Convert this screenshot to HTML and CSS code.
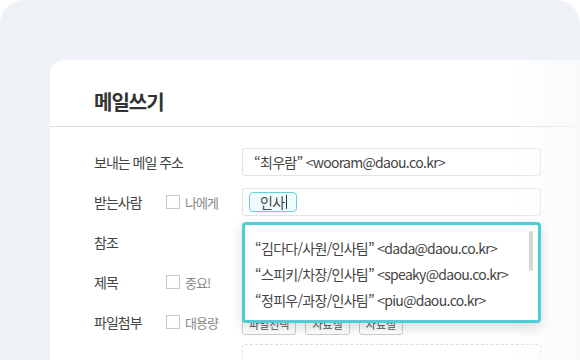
FILE: index.html
```html
<!DOCTYPE html>
<html lang="ko">
<head>
  <meta charset="UTF-8">
  <title>메일쓰기</title>
  <link rel="stylesheet" href="styles.css">
</head>
<body>
  <div class="frame">
    <div class="panel">
      <div class="panelHead">
        <h1>메일쓰기</h1>
      </div>

      <div class="form">
        <div class="row">
          <div class="label">보내는 메일 주소</div>
          <div class="option"></div>
          <div class="field">“최우람” &lt;wooram@daou.co.kr&gt;</div>
        </div>

        <div class="row">
          <div class="label">받는사람</div>
          <div class="option"><span class="check"></span>나에게</div>
          <div class="field">
            <span class="tag">인사<span class="caret"></span></span>
          </div>
          <div class="dropdown">
            <div class="item">“김다다/사원/인사팀” &lt;dada@daou.co.kr&gt;</div>
            <div class="item">“스피키/차장/인사팀” &lt;speaky@daou.co.kr&gt;</div>
            <div class="item">“정피우/과장/인사팀” &lt;piu@daou.co.kr&gt;</div>
            <div class="scroll"></div>
          </div>
        </div>

        <div class="row">
          <div class="label">참조</div>
          <div class="option"></div>
          <div class="field"></div>
        </div>

        <div class="row">
          <div class="label">제목</div>
          <div class="option"><span class="check"></span>중요!</div>
          <div class="field"></div>
        </div>

        <div class="row">
          <div class="label">파일첨부</div>
          <div class="option"><span class="check"></span>대용량</div>
          <div class="buttons">
            <button class="small">파일선택</button>
            <button class="small">자료실</button>
            <button class="small">자료실</button>
          </div>
        </div>

        <div class="dropZone"></div>
      </div>
    </div>
  </div>
</body>
</html>
```

FILE: styles.css
```css
body {
  margin: 0;
  background: #ffffff;
  font-family: "Noto Sans CJK KR", "Liberation Sans", sans-serif;
  color: #444444;
  overflow: hidden;
}
.frame {
  height: 420px;
  padding: 60px 0 0 50px;
  background: #eff3f8;
  border-radius: 24px 24px 0 0;
}
.panel {
  position: relative;
  height: 360px;
  background: #ffffff;
  border-radius: 14px 0 0 0;
}
.panel::after {
  content: "";
  position: absolute;
  top: 0;
  right: 0;
  bottom: 0;
  width: 70px;
  background: linear-gradient(90deg, rgba(247,249,251,0), rgba(247,249,251,0.9));
  pointer-events: none;
}
.panelHead {
  height: 67px;
  padding-left: 44px;
  border-bottom: 1px solid #dcdcdc;
  box-sizing: border-box;
}
h1 {
  margin: 0;
  padding-top: 30px;
  font-size: 20px;
  font-weight: bold;
  letter-spacing: -1px;
  color: #333333;
  line-height: 24px;
}
.form {
  padding: 21px 0 0 44px;
}
.row {
  position: relative;
  display: grid;
  grid-template-columns: 72px 76px 299px;
  align-items: center;
  height: 28px;
  margin-bottom: 12px;
}
.label {
  font-size: 14px;
  letter-spacing: -1px;
  white-space: nowrap;
  color: #444444;
}
.option {
  display: flex;
  align-items: center;
  gap: 5px;
  font-size: 13px;
  letter-spacing: -1px;
  color: #888888;
}
.check {
  width: 12px;
  height: 12px;
  border: 1px solid #c8c8c8;
  background: #ffffff;
}
.field {
  height: 28px;
  box-sizing: border-box;
  border: 1px solid #e3e3e3;
  border-radius: 3px;
  padding: 0 11px;
  font-size: 14px;
  line-height: 26px;
  letter-spacing: -0.7px;
  white-space: nowrap;
  display: flex;
  align-items: center;
}
.tag {
  display: flex;
  align-items: center;
  height: 20px;
  width: 48px;
  margin-left: -5px;
  box-sizing: border-box;
  padding-left: 10px;
  background: #effbfc;
  border: 1px solid #62d2da;
  border-radius: 4px;
  font-size: 14px;
}
.caret {
  width: 1px;
  height: 14px;
  margin-left: 2px;
  background: #333333;
}
.dropdown {
  position: absolute;
  top: 34px;
  left: 148px;
  width: 299px;
  height: 101px;
  box-sizing: border-box;
  padding-top: 10px;
  padding-left: 10px;
  border: 3px solid #4ecdd5;
  border-radius: 4px;
  background: #ffffff;
  box-shadow: 0 5px 12px rgba(0,0,0,0.14);
  z-index: 2;
}
.item {
  height: 26px;
  line-height: 26px;
  font-size: 14px;
  letter-spacing: -0.7px;
  white-space: nowrap;
  color: #444444;
}
.scroll {
  position: absolute;
  top: 6px;
  right: 5px;
  width: 4px;
  height: 40px;
  border-radius: 2px;
  background: #d6d6d6;
}
.buttons {
  display: flex;
  gap: 9px;
}
.small {
  height: 22px;
  margin-top: 3px;
  padding: 0 6px;
  border: 1px solid #cccccc;
  border-radius: 3px;
  background: #ffffff;
  font-family: "Noto Sans CJK KR", sans-serif;
  font-size: 11px;
  color: #555555;
}
.dropZone {
  width: 299px;
  height: 60px;
  margin: -4px 0 0 148px;
  box-sizing: border-box;
  border: 1px dashed #dddddd;
  border-radius: 3px;
}
```
